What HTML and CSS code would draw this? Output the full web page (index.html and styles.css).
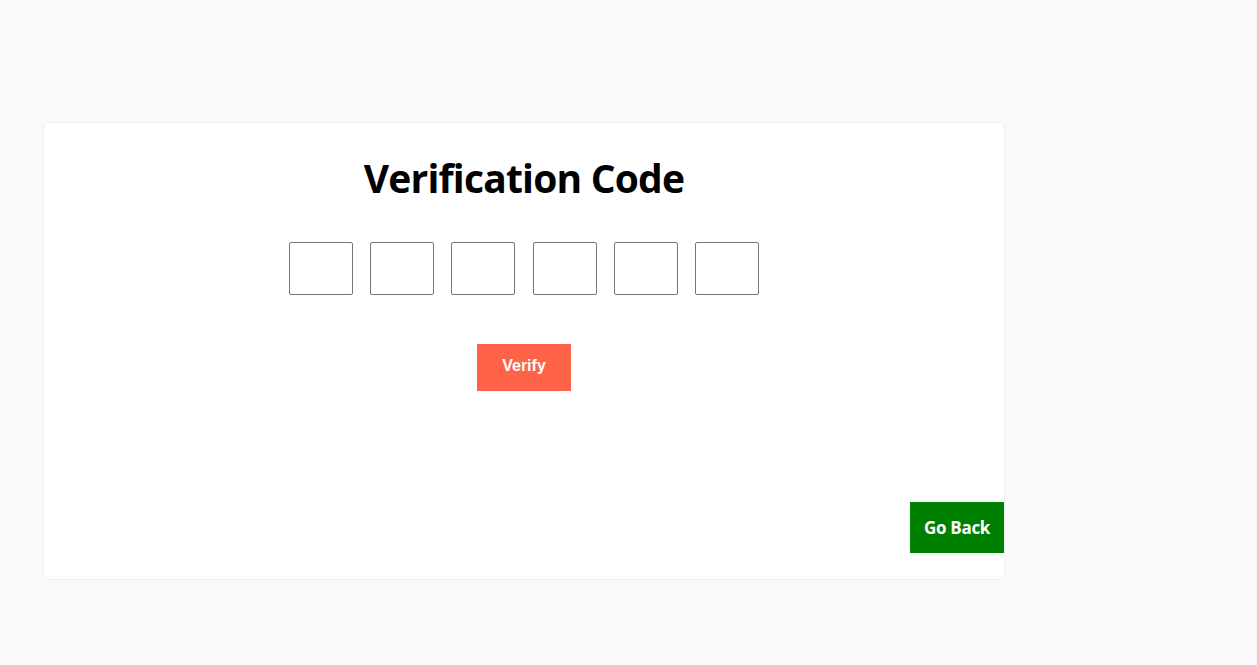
FILE: index.html
```html
<!DOCTYPE html>
<html lang="en">
<head>
<meta charset="utf-8">
<title>Verification Code</title>
<link rel="stylesheet" href="styles.css">
</head>
<body>
<main class="card">
  <h1 class="title">Verification Code</h1>
  <div class="code-row">
    <input class="code-box" type="text" maxlength="1">
    <input class="code-box" type="text" maxlength="1">
    <input class="code-box" type="text" maxlength="1">
    <input class="code-box" type="text" maxlength="1">
    <input class="code-box" type="text" maxlength="1">
    <input class="code-box" type="text" maxlength="1">
  </div>
  <button class="verify-btn" type="button">Verify</button>
  <button class="back-btn" type="button">Go Back</button>
</main>
</body>
</html>
```
FILE: styles.css
```css
html, body {
  margin: 0;
  padding: 0;
}
body {
  background: #f9f9f9;
  font-family: "Open Sans", "Noto Sans", sans-serif;
  padding: 122px 0 0 43px;
}
.card {
  box-sizing: border-box;
  width: 962px;
  height: 458px;
  background: #ffffff;
  border: 1px solid #eeeeee;
  border-radius: 6px;
  display: flex;
  flex-direction: column;
  align-items: center;
}
.title {
  margin: 28px 0 0;
  font-size: 39px;
  letter-spacing: -0.8px;
  font-weight: 700;
  line-height: 54px;
  color: #000;
}
.code-row {
  display: flex;
  gap: 17.2px;
  margin-top: 37px;
}
.code-box {
  box-sizing: border-box;
  width: 64px;
  height: 53px;
  margin: 0;
  border: 1px solid #767676;
  border-radius: 2px;
  background: #fff;
  padding: 0;
}
.verify-btn {
  margin-top: 49px;
  width: 94px;
  height: 47px;
  border: none;
  background: #ff6347;
  color: #fff;
  font-family: "Liberation Sans", Arial, sans-serif;
  font-weight: 700;
  font-size: 16px;
  line-height: 18px;
  padding: 0 0 3px;
}
.back-btn {
  margin-top: auto;
  margin-bottom: 26px;
  align-self: flex-end;
  width: 94px;
  height: 51px;
  border: none;
  background: #008000;
  color: #fff;
  font-family: "Open Sans", "Noto Sans", sans-serif;
  font-weight: 700;
  font-size: 17px;
  letter-spacing: -0.3px;
  padding: 0;
}
```
